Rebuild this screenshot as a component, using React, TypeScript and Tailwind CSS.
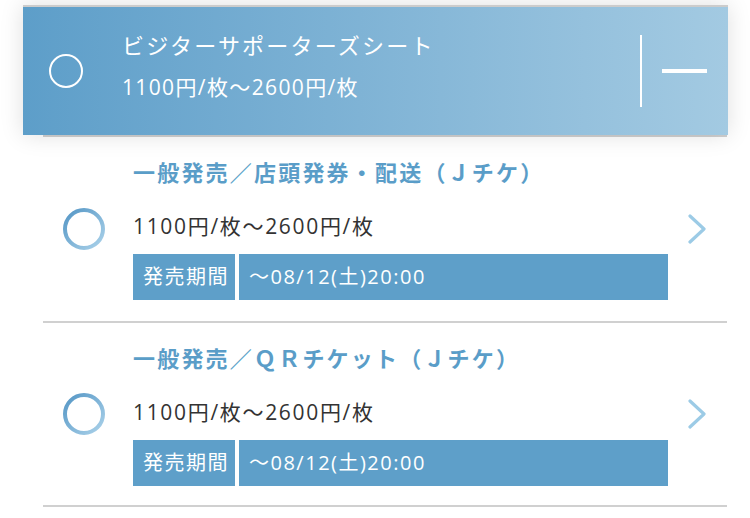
import React from "react";

const items = [
  { id: "store", title: "一般発売／店頭発券・配送（Ｊチケ）" },
  { id: "qr", title: "一般発売／ＱＲチケット（Ｊチケ）" },
];

const font = { fontFamily: '"Open Sans", "Noto Sans CJK JP", sans-serif' };

const RingIcon = ({ id }: { id: string }) => (
  <svg width="42" height="42" viewBox="0 0 42 42" className="shrink-0">
    <defs>
      <linearGradient id={`ring-${id}`} x1="0" y1="0" x2="1" y2="1">
        <stop offset="0%" stopColor="#5496c5" />
        <stop offset="100%" stopColor="#abd2ea" />
      </linearGradient>
    </defs>
    <circle cx="21" cy="21" r="19" fill="none" stroke={`url(#ring-${id})`} strokeWidth="4" />
  </svg>
);

const Chevron = () => (
  <svg width="18" height="30" viewBox="0 0 18 30" className="shrink-0">
    <polyline
      points="2,2 16,15 2,28"
      fill="none"
      stroke="#9ccbe6"
      strokeWidth="3.2"
      strokeLinecap="round"
      strokeLinejoin="round"
    />
  </svg>
);

const App = () => {
  return (
    <div className="w-[750px] h-[518px] overflow-hidden bg-white pt-[5px]" style={font}>
      {/* selected seat header */}
      <div className="relative z-10 ml-[23px] w-[705px] h-[130px] border-t-2 border-[#cccccc] bg-linear-to-r from-[#5d9ec9] to-[#a3cae2] shadow-[0_0_22px_rgba(0,0,0,0.13)] flex items-center">
        <div className="ml-[26px] w-[34px] h-[34px] rounded-full border-2 border-white shrink-0"></div>
        <div className="ml-[39px] pb-[10px] flex flex-col text-white">
          <p className="text-[22px] leading-[32px] tracking-[0.1em]">ビジターサポーターズシート</p>
          <p className="mt-[10px] text-[21px] leading-[32px] tracking-[0.065em]">1100円/枚〜2600円/枚</p>
        </div>
        <div className="ml-auto w-[2px] h-[72px] bg-white"></div>
        <div className="ml-[20px] mr-[21px] w-[45px] h-[4px] bg-white"></div>
      </div>

      {/* ticket list */}
      <div className="ml-[43px] w-[684px] bg-white">
        {items.map((item) => (
          <div
            key={item.id}
            className="h-[186px] border-t-2 border-[#d0d0d0] flex items-center pl-[20px] last:border-b-2"
          >
            <RingIcon id={item.id} />
            <div className="ml-[28px] w-[535px] flex flex-col self-start pt-[19px]">
              <p className="text-[22px] leading-[32px] font-bold text-[#5a9dc8] tracking-[0.1em]">
                {item.title}
              </p>
              <p className="mt-[24px] text-[21px] leading-[28px] text-[#333333] tracking-[0.08em]">
                1100円/枚〜2600円/枚
              </p>
              <div className="mt-[14px] flex gap-[4px] h-[46px] text-white text-[20px] tracking-[0.075em]">
                <div className="bg-[#5e9fc9] pl-[10px] pr-[6px] flex items-center">発売期間</div>
                <div className="flex-1 bg-[#5e9fc9] px-[10px] flex items-center">〜08/12(土)20:00</div>
              </div>
            </div>
            <div className="ml-[20px]">
              <Chevron />
            </div>
          </div>
        ))}
      </div>
    </div>
  );
};

export default App;
